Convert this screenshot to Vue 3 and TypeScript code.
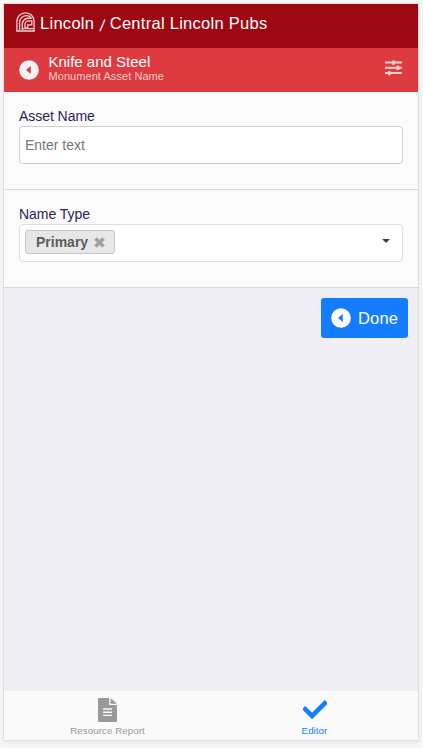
<script setup lang="ts">
import { ref } from 'vue'

const assetName = ref('')
const nameTypes = ref<string[]>(['Primary'])
const activeTab = ref<'report' | 'editor'>('editor')

function removeType(name: string) {
  nameTypes.value = nameTypes.value.filter((n) => n !== name)
}
</script>

<template>
  <div class="page">
    <div class="device">
      <header class="topbar">
        <svg class="logo" width="19" height="20" viewBox="0 0 19 20" fill="none" stroke="currentColor">
          <path d="M.9 19.2V9.4A8.6 8.6 0 0 1 18.1 9.4V19.2" stroke-width="1.3" />
          <path d="M3.6 18V10.5A6.8 6.8 0 0 1 10.5 3.6Q13.4 3.6 15 5.4" stroke-width="1.2" />
          <path d="M6.3 18V12A5.8 5.8 0 0 1 12 6.2H15.8" stroke-width="1.4" />
          <path d="M9 15.8V12.5A3.7 3.7 0 0 1 12.7 8.8H15.8V12.8H11.8V15.8H9" stroke-width="1.3" />
          <path d="M.3 19H18.7M6 16.6H17.5" stroke-width="1.3" />
        </svg>
        <h1 class="title">
          <span>Lincoln</span>
          <span class="slash">/</span>
          <span>Central Lincoln Pubs</span>
        </h1>
      </header>
      <div class="subbar">
        <svg class="back" width="20" height="20" viewBox="0 0 20 20">
          <circle cx="10" cy="10" r="9.8" fill="#f4f4f4" />
          <path d="M11.8 6V14L7 10Z" fill="#de3b41" />
        </svg>
        <div class="heading">
          <div class="name">Knife and Steel</div>
          <div class="kind">Monument Asset Name</div>
        </div>
        <svg class="sliders" width="17" height="16" viewBox="0 0 17 16" fill="currentColor">
          <path d="M0 1.6H17V3.6H0ZM0 6.8H17V8.8H0ZM0 12.1H17V14.1H0Z" />
          <path d="M7.2 .4H9.8V4.8H7.2ZM11.6 5.6H14.2V10H11.6ZM3 10.9H5.6V15.2H3Z" />
        </svg>
      </div>

      <section class="field">
        <label class="label" for="asset-name">Asset Name</label>
        <input id="asset-name" v-model="assetName" class="control" type="text" placeholder="Enter text" />
      </section>
      <section class="field">
        <div class="label">Name Type</div>
        <div class="control select">
          <span v-for="type in nameTypes" :key="type" class="chip">
            <span>{{ type }}</span>
            <svg width="11" height="11" viewBox="0 0 11 11" @click="removeType(type)">
              <path d="M1.5 1.5L9.5 9.5M9.5 1.5L1.5 9.5" stroke="#a0a0a0" stroke-width="3.6" />
            </svg>
          </span>
          <svg class="caret" width="8" height="4" viewBox="0 0 8 4"><path d="M0 0H8L4 4Z" fill="#444" /></svg>
        </div>
      </section>

      <main class="body">
        <button class="done" type="button">
          <svg width="20" height="20" viewBox="0 0 20 20">
            <circle cx="10" cy="10" r="9.8" fill="#fff" />
            <path d="M11.8 6V14L7 10Z" fill="#157dfd" />
          </svg>
          <span class="done-text">Done</span>
        </button>
      </main>

      <nav class="tabs">
        <a class="tab" :class="{ active: activeTab === 'report' }" @click="activeTab = 'report'">
          <svg width="19" height="24" viewBox="0 0 19 24">
            <path d="M1.2 0H11.2V7H19V22.8Q19 24 17.8 24H1.2Q0 24 0 22.8V1.2Q0 0 1.2 0ZM12.6 0L19 5.8H12.6Z" fill="currentColor" />
            <path d="M5 11H14M5 14.2H14M5 17.4H14" stroke="#fafafa" stroke-width="1.4" />
          </svg>
          <span class="tab-text">Resource Report</span>
        </a>
        <a class="tab" :class="{ active: activeTab === 'editor' }" @click="activeTab = 'editor'">
          <svg width="24" height="24" viewBox="0 0 24 24">
            <path d="M2.2 11.2L9.1 18L21.8 5.3" fill="none" stroke="currentColor" stroke-width="4.6" stroke-linecap="square" />
          </svg>
          <span class="tab-text">Editor</span>
        </a>
      </nav>
    </div>
  </div>
</template>

<style>
body {
  background: #f7f7f7;
}
</style>

<style scoped>
.page {
  box-sizing: border-box;
  height: 748px;
  padding: 3px 4px 7px 3px;
  font-family: "Liberation Sans", Arial, sans-serif;
  overflow: hidden;
}
.device {
  box-sizing: border-box;
  height: 738px;
  border: 1px solid #dfdfdf;
  box-shadow: 0 2px 5px rgba(0, 0, 0, 0.06);
  background: #fafafa;
  display: flex;
  flex-direction: column;
}
svg {
  display: block;
  flex: none;
}
.topbar {
  height: 44px;
  box-sizing: border-box;
  background: #9e0812;
  color: #fff;
  display: flex;
  align-items: flex-start;
  padding: 8px 12px;
}
.logo {
  color: #f3d0d4;
}
.title {
  display: flex;
  gap: 5.5px;
  margin: 1px 0 0 5px;
  font-size: 16.5px;
  line-height: 20px;
  font-weight: 400;
  white-space: nowrap;
  letter-spacing: 0.28px;
}
.slash {
  margin-top: 3px;
  font-size: 16px;
  letter-spacing: 0;
  transform: skewX(-9deg);
}
.subbar {
  height: 44px;
  background: #de3b41;
  color: #fff;
  display: flex;
  align-items: center;
  padding: 0 16px 0 15px;
}
.heading {
  flex: 1;
  margin: -6px 0 0 9.5px;
}
.name {
  font-size: 15px;
  line-height: 17px;
}
.kind {
  font-size: 11px;
  line-height: 12px;
  letter-spacing: 0.06px;
  color: #f5cacb;
}
.sliders {
  color: #f2d0d1;
  margin-top: -4px;
}
.field {
  box-sizing: border-box;
  height: 98px;
  padding: 15px 15px 0;
  border-bottom: 1px solid #d9d9dc;
  background: #fbfbfb;
}
.label {
  display: block;
  height: 19px;
  font-size: 14px;
  line-height: 18px;
  letter-spacing: -0.05px;
  color: #2a2354;
}
.control {
  display: block;
  box-sizing: border-box;
  width: 100%;
  height: 38px;
  border: 1px solid #cfcfcf;
  border-radius: 4px;
  background: #fff;
  padding: 0 5px;
  font: 14px "Liberation Sans", Arial, sans-serif;
  outline: none;
}
.control::placeholder {
  color: #777;
  opacity: 1;
}
.select {
  display: flex;
  align-items: center;
  border-color: #ddd;
  padding-right: 12px;
}
.chip {
  box-sizing: border-box;
  height: 24px;
  border: 1px solid #c8c8c8;
  border-radius: 3px;
  background: #e7e7e7;
  display: flex;
  align-items: center;
  gap: 6px;
  padding: 0 9px 0 10px;
  margin-top: -2px;
  color: #5c5c5c;
  font-weight: 700;
}
.caret {
  margin: -4px 0 0 auto;
}
.body {
  flex: 1;
  background: #efeef4;
  display: flex;
  justify-content: flex-end;
  align-items: flex-start;
  padding: 10px;
}
.done {
  width: 87px;
  height: 40px;
  border: 0;
  border-radius: 3px;
  padding: 0 10px;
  background: #157dfd;
  color: #fff;
  display: flex;
  align-items: center;
  gap: 7px;
  font: 16.5px "Liberation Sans", Arial, sans-serif;
  letter-spacing: 0.2px;
}
.done-text {
  margin-top: 1px;
}
.tabs {
  height: 49px;
  display: flex;
}
.tab {
  flex: 1;
  display: flex;
  flex-direction: column;
  align-items: center;
  padding-top: 7px;
  color: #999;
}
.tab.active {
  color: #157dfd;
}
.tab-text {
  font-size: 9.75px;
  line-height: 12px;
  margin-top: 3px;
  letter-spacing: 0.06px;
}
</style>
